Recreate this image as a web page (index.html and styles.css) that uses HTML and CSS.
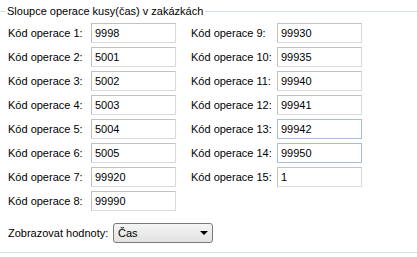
FILE: index.html
```html
<!DOCTYPE html>
<html lang="cs">
<head>
    <meta charset="UTF-8">
    <title>Sloupce operace</title>
    <link rel="stylesheet" href="styles.css">
</head>
<body>
    <div class="group">
        <div class="legend"><span class="legend-text">Sloupce operace kusy(čas) v zakázkách</span></div>

        <div class="cols">
            <div class="col">
                <div class="row"><span class="lbl">Kód operace 1:</span><span class="box">9998</span></div>
                <div class="row"><span class="lbl">Kód operace 2:</span><span class="box">5001</span></div>
                <div class="row"><span class="lbl">Kód operace 3:</span><span class="box">5002</span></div>
                <div class="row"><span class="lbl">Kód operace 4:</span><span class="box">5003</span></div>
                <div class="row"><span class="lbl">Kód operace 5:</span><span class="box">5004</span></div>
                <div class="row"><span class="lbl">Kód operace 6:</span><span class="box">5005</span></div>
                <div class="row"><span class="lbl">Kód operace 7:</span><span class="box">99920</span></div>
                <div class="row"><span class="lbl">Kód operace 8:</span><span class="box">99990</span></div>
            </div>
            <div class="col col-right">
                <div class="row"><span class="lbl">Kód operace 9:</span><span class="box">99930</span></div>
                <div class="row"><span class="lbl">Kód operace 10:</span><span class="box">99935</span></div>
                <div class="row"><span class="lbl">Kód operace 11:</span><span class="box">99940</span></div>
                <div class="row"><span class="lbl">Kód operace 12:</span><span class="box">99941</span></div>
                <div class="row"><span class="lbl">Kód operace 13:</span><span class="box box-hot">99942</span></div>
                <div class="row"><span class="lbl">Kód operace 14:</span><span class="box box-hot">99950</span></div>
                <div class="row"><span class="lbl">Kód operace 15:</span><span class="box">1</span></div>
            </div>
        </div>

        <div class="row select-row">
            <span class="lbl lbl-wide">Zobrazovat hodnoty:</span>
            <div class="combo">
                <span class="combo-text">Čas</span>
                <span class="combo-btn"><span class="arrow"></span></span>
            </div>
        </div>
    </div>
</body>
</html>
```

FILE: styles.css
```css
body {
    margin: 0;
    background: #fff;
    color: #000;
    font-family: 'Liberation Sans', Arial, sans-serif;
    font-size: 11px;
}

.group {
    height: 248px;
    border-bottom: 1px solid #d5dfe5; /* spodni linka */
}

.legend {
    display: flex;
    align-items: center;
    height: 14px;
    margin-top: 4px;
}

.legend::before {
    content: "";
    width: 6px;
    border-top: 1px solid #d5dfe5;
}

.legend::after {
    content: "";
    flex: 1;
    border-top: 1px solid #d5dfe5;
}

.legend-text {
    padding: 0 2px 0 1px;
    white-space: nowrap;
}

.cols {
    display: flex;
    margin-top: 5px;
    padding-left: 8px;
}

.col {
    display: flex;
    flex-direction: column;
    gap: 4px;
}

.col-right {
    margin-left: 15px;
}

.row {
    display: flex;
    align-items: center;
    height: 20px;
}

.lbl {
    width: 83px;
    white-space: nowrap;
}

.col-right .lbl {
    width: 86px;
}

.box {
    box-sizing: border-box;
    width: 85px;
    height: 20px;
    padding: 2px 3px;
    border: 1px solid #c2c2c2;
    border-right-color: #dcdcdc;
    border-bottom-color: #dcdcdc;
    line-height: 15px;
}

.box-hot {
    border-color: #a9bdd6;
}

.select-row {
    margin-top: 12px;
    padding-left: 8px;
}

.lbl-wide {
    width: 105px;
}

.combo {
    box-sizing: border-box;
    display: flex;
    align-items: center;
    width: 100px;
    height: 20px;
    border: 1px solid #7a7a7a;
    border-radius: 3px;
    background: linear-gradient(#f4f4f4, #e2e2e2);
}

.combo-text {
    flex: 1;
    padding-left: 4px;
}

.combo-btn {
    display: flex;
    align-items: center;
    justify-content: center;
    width: 14px;
    height: 16px;
    margin-right: 1px;
}

.arrow {
    width: 0;
    height: 0;
    border-left: 4px solid transparent;
    border-right: 4px solid transparent;
    border-top: 4px solid #000;
}
```
